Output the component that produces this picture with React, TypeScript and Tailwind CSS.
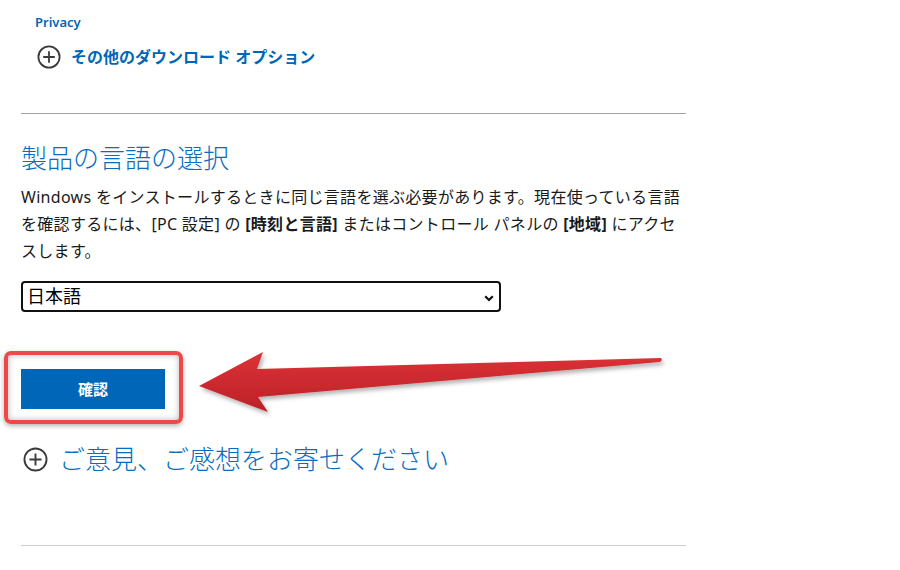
import React from "react";

const PlusCircle = ({ size }: { size: number }) => (
  <svg width={size} height={size} viewBox="0 0 24 24" fill="none" className="shrink-0">
    <circle cx="12" cy="12" r="10.6" stroke="#3b3b3b" strokeWidth="1.8" />
    <path d="M12 6.2v11.6M6.2 12h11.6" stroke="#3b3b3b" strokeWidth="1.8" />
  </svg>
);

export default function App() {
  return (
    <div
      className="relative w-[900px] h-[570px] bg-white overflow-hidden"
      style={{ fontFamily: "'Noto Sans', 'Noto Sans CJK JP', sans-serif" }}
    >
      <div className="pl-[21px] w-[686px]">
        <div className="pl-[14px] pt-[12px] text-[13px] leading-[20px] font-semibold text-[#0067b8]">
          Privacy
        </div>
        <div className="mt-[13px] ml-[16px] flex items-center gap-[10px] h-[24px]">
          <PlusCircle size={24} />
          <span className="text-[16px] leading-[24px] font-bold text-[#0067b8] whitespace-nowrap">
            その他のダウンロード オプション
          </span>
        </div>
        <div className="mt-[44px] h-px bg-[#a3a3a3]" />
        <h2 className="mt-[28px] text-[26px] leading-[32px] font-light text-[#0a6cc0] whitespace-nowrap">
          製品の言語の選択
        </h2>
        <p className="mt-[10px] text-[16px] leading-[27px] text-[#1a1a1a] whitespace-nowrap tracking-[0.3px]">
          Windows をインストールするときに同じ言語を選ぶ必要があります。現在使っている言語
          <br />
          を確認するには、[PC 設定] の <b>[時刻と言語]</b> またはコントロール パネルの <b>[地域]</b> にアクセ
          <br />
          スします。
        </p>
        <div className="relative mt-[16px] w-[480px] h-[31px] border-2 border-[#111] rounded-[4px] flex items-center pl-[4px]">
          <span className="text-[18px] leading-[27px] text-black">日本語</span>
          <svg
            width="10"
            height="7"
            viewBox="0 0 10 7"
            className="absolute right-[5px] top-[12px]"
          >
            <path d="M1.2 1.2L5 5l3.8-3.8" stroke="#111" strokeWidth="2.2" fill="none" />
          </svg>
        </div>
        <button className="mt-[57px] w-[144px] h-[40px] bg-[#0067b8] text-white text-[15px] font-bold flex items-center justify-center">
          確認
        </button>
        <div className="mt-[37px] flex items-center gap-[11px] h-[26px] pl-[2px]">
          <PlusCircle size={25} />
          <span className="text-[26px] leading-[32px] font-light text-[#0a6cc0] whitespace-nowrap">
            ご意見、ご感想をお寄せください
          </span>
        </div>
        <div className="mt-[73px] h-px bg-[#cccccc]" />
      </div>

      {/* red highlight annotation */}
      <div className="absolute left-[4px] top-[351px] w-[179px] h-[73px] border-[4px] border-[#f04848] rounded-[7px] shadow-[0_2px_5px_rgba(0,0,0,0.3),inset_0_0_6px_rgba(0,0,0,0.28)] pointer-events-none" />

      {/* arrow annotation */}
      <svg
        width="900"
        height="570"
        viewBox="0 0 900 570"
        className="absolute left-0 top-0 pointer-events-none"
      >
        <defs>
          <linearGradient id="ar" x1="0" y1="0" x2="0" y2="1">
            <stop offset="0" stopColor="#dc3237" />
            <stop offset="1" stopColor="#bb2227" />
          </linearGradient>
          <filter id="sh" x="-10%" y="-50%" width="120%" height="200%">
            <feDropShadow dx="2" dy="3" stdDeviation="2.2" floodColor="#000" floodOpacity="0.3" />
          </filter>
        </defs>
        <polygon
          points="199,386 263,352 257,369 661,358 662,360 660,362 258,397 268,412"
          fill="url(#ar)"
          filter="url(#sh)"
        />
      </svg>
    </div>
  );
}
